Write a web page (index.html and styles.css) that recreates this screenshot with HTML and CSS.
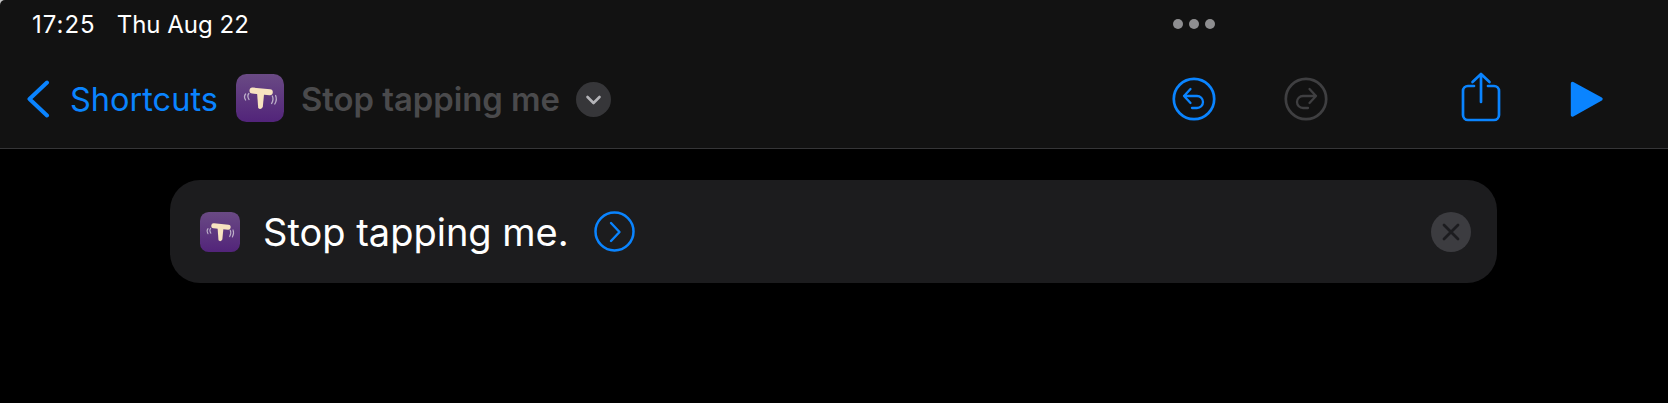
FILE: index.html
```html
<!DOCTYPE html>
<html lang="en">
<head>
<meta charset="utf-8">
<title>Stop tapping me</title>
<link rel="stylesheet" href="styles.css">
</head>
<body>
<svg class="defs" width="0" height="0" aria-hidden="true">
  <defs>
    <linearGradient id="appGrad" x1="0" y1="0" x2="0" y2="1">
      <stop offset="0" stop-color="#6a4a84"/>
      <stop offset="1" stop-color="#52247a"/>
    </linearGradient>
    <symbol id="appIcon" viewBox="0 0 48 48">
      <rect width="48" height="48" rx="10.5" fill="url(#appGrad)"/>
      <path d="M16.5 16.5 L33.8 18.3" stroke="#f8e4c0" stroke-width="6" stroke-linecap="round" fill="none"/>
      <path d="M21 18 L28.2 18.5 L26.8 33 Q24.6 36.4 22.2 34 Z" fill="#f8e4c0"/>
      <g stroke="#bcaec8" stroke-width="1.3" stroke-linecap="round" fill="none">
        <path d="M12.8 19.5 Q10.8 22 13 25.5"/>
        <path d="M9.6 20 Q7.4 22.5 9.6 26"/>
        <path d="M36.3 22 Q38 25.5 35.6 29.5"/>
        <path d="M39.6 21.5 Q41.4 25.5 38.8 30"/>
      </g>
    </symbol>
  </defs>
</svg>
<div class="app">
  <header class="header">
    <div class="status">
      <span class="time">17:25</span>
      <span class="date">Thu Aug 22</span>
      <div class="dots"><i></i><i></i><i></i></div>
    </div>
    <nav class="nav">
      <svg class="back" width="24" height="38" viewBox="0 0 24 38"><path d="M21 2.5 L3.5 19 L21 35.5" fill="none" stroke="#0a84ff" stroke-width="4" stroke-linecap="round" stroke-linejoin="round"/></svg>
      <span class="back-label">Shortcuts</span>
      <svg class="nav-app" width="48" height="48"><use href="#appIcon"/></svg>
      <span class="title">Stop tapping me</span>
      <svg class="menu" width="35" height="35" viewBox="0 0 35 35"><circle cx="17.5" cy="17.5" r="17.5" fill="#363639"/><path d="M11.5 15 L17.5 21 L23.5 15" fill="none" stroke="#b4b4b8" stroke-width="2.6" stroke-linecap="round" stroke-linejoin="round"/></svg>
      <div class="tools">
        <svg class="undo" width="44" height="44" viewBox="0 0 44 44" fill="none" stroke="#0a84ff"><circle cx="22" cy="22" r="20.2" stroke-width="2.7"/><path d="M18.5 12 L12 19 L18.5 26 M12 19 H25 A6 6 0 0 1 25 31 H20" stroke-width="2.3" stroke-linecap="round" stroke-linejoin="round"/></svg>
        <svg class="redo" width="44" height="44" viewBox="0 0 44 44" fill="none" stroke="#3f3f41"><circle cx="22" cy="22" r="20.2" stroke-width="2.7"/><path d="M25.5 12 L32 19 L25.5 26 M32 19 H19 A6 6 0 0 0 19 31 H24" stroke-width="2.3" stroke-linecap="round" stroke-linejoin="round"/></svg>
        <svg class="share" width="40" height="50" viewBox="0 0 40 50" fill="none" stroke="#0a84ff" stroke-width="2.7" stroke-linecap="round" stroke-linejoin="round"><path d="M13 14 H7 A5 5 0 0 0 2 19 V43 A5 5 0 0 0 7 48 H33 A5 5 0 0 0 38 43 V19 A5 5 0 0 0 33 14 H27"/><path d="M20 30 V2 M11.5 10 L20 2 L28.5 10"/></svg>
        <svg class="play" width="34" height="38" viewBox="0 0 34 38"><path d="M2.5 3.5 L31 19 L2.5 35 Z" fill="#0a84ff" stroke="#0a84ff" stroke-width="3.4" stroke-linejoin="round"/></svg>
      </div>
    </nav>
  </header>
  <main class="content">
    <section class="card">
      <svg class="card-app" width="40" height="40"><use href="#appIcon"/></svg>
      <span class="card-text">Stop tapping me.</span>
      <svg class="go" width="41" height="41" viewBox="0 0 41 41" fill="none" stroke="#0a84ff"><circle cx="20.5" cy="20.5" r="19" stroke-width="2.5"/><path d="M17 12 L25.5 21 L17 30" stroke-width="2.4" stroke-linecap="round" stroke-linejoin="round"/></svg>
      <svg class="close" width="40" height="40" viewBox="0 0 40 40"><circle cx="20" cy="20" r="20" fill="#3c3c40"/><path d="M13 13 L27 27 M27 13 L13 27" stroke="#1c1c1f" stroke-width="2.8" stroke-linecap="round"/></svg>
    </section>
  </main>
</div>
</body>
</html>
```
FILE: styles.css
```css
* { box-sizing: border-box; }
html, body { margin: 0; height: 100%; background: #c4c4c4; overflow: hidden; }
body { font-family: Inter, "Liberation Sans", sans-serif; }
.defs { display: block; height: 0; }
svg { display: block; flex: none; }
.app { height: 403px; display: flex; flex-direction: column; }
.header { height: 149px; background: #121212; border-bottom: 1px solid #353537; display: flex; flex-direction: column; border-top-left-radius: 5px; }
.status { height: 48px; display: flex; align-items: center; padding: 0 453px 0 32px; color: #fff; font-size: 24px; }
.time { letter-spacing: 1px; }
.date { margin-left: 21px; }
.dots { display: flex; gap: 6px; margin-left: auto; }
.dots i { width: 10px; height: 10px; border-radius: 50%; background: #8e8e90; }
.nav { flex: 1; display: flex; align-items: center; padding: 2px 0 0 26px; }
.back-label { margin-left: 20px; color: #0a84ff; font-size: 32.5px; }
.nav-app { margin-left: 18px; margin-bottom: 2px; }
.title { margin-left: 17px; color: #4a4a4c; font-size: 32.8px; font-weight: 600; }
.menu { margin-left: 16px; }
.tools { margin-left: auto; display: flex; align-items: center; padding-right: 64px; }
.redo { margin-left: 68px; }
.share { margin-left: 133px; margin-bottom: 4px; }
.play { margin-left: 69px; }
.content { flex: 1; background: #000; padding: 31px 171px 0 170px; }
.card { height: 103px; background: #1c1c1e; border-radius: 30px; display: flex; align-items: center; padding: 0 26px 0 30px; }
.card-text { margin-left: 23px; color: #fff; font-size: 38px; }
.go { margin-left: 25px; }
.close { margin-left: auto; }
```
